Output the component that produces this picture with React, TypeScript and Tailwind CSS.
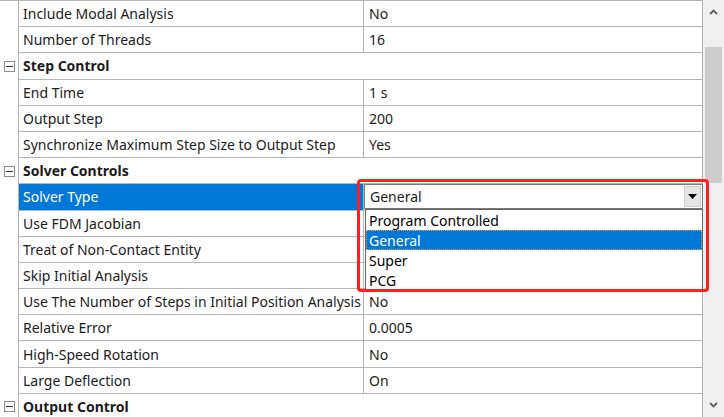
import React from "react";

type Row =
  | { kind: "group"; label: string }
  | { kind: "prop"; label: string; value: string; selected?: boolean };

const rows: Row[] = [
  { kind: "prop", label: "Include Modal Analysis", value: "No" },
  { kind: "prop", label: "Number of Threads", value: "16" },
  { kind: "group", label: "Step Control" },
  { kind: "prop", label: "End Time", value: "1 s" },
  { kind: "prop", label: "Output Step", value: "200" },
  { kind: "prop", label: "Synchronize Maximum Step Size to Output Step", value: "Yes" },
  { kind: "group", label: "Solver Controls" },
  { kind: "prop", label: "Solver Type", value: "General", selected: true },
  { kind: "prop", label: "Use FDM Jacobian", value: "" },
  { kind: "prop", label: "Treat of Non-Contact Entity", value: "" },
  { kind: "prop", label: "Skip Initial Analysis", value: "" },
  { kind: "prop", label: "Use The Number of Steps in Initial Position Analysis", value: "No" },
  { kind: "prop", label: "Relative Error", value: "0.0005" },
  { kind: "prop", label: "High-Speed Rotation", value: "No" },
  { kind: "prop", label: "Large Deflection", value: "On" },
  { kind: "group", label: "Output Control" },
];

function MinusBox() {
  return (
    <div className="w-[11px] h-[11px] border border-[#8c8c8c] bg-white flex items-center justify-center">
      <div className="w-[7px] h-px bg-[#333]" />
    </div>
  );
}

function Dropdown() {
  const items = ["Program Controlled", "General", "Super", "PCG"];
  return (
    <>
      <div className="absolute left-[-7px] top-[-5px] w-[352px] h-[113px] border-[3px] border-[#ff1f1f] rounded-[4px] z-20 pointer-events-none" />
      <div className="absolute left-0 top-0 w-[339px] h-[25px] bg-white border border-[#7a7a7a] z-10 flex items-center">
        <span className="pl-[5px] flex-1 text-[14px]">General</span>
        <div className="w-[17px] h-[21px] mr-[1px] bg-[#e6e6e6] border border-[#cfcfcf] flex items-center justify-center">
          <svg width="9" height="5" viewBox="0 0 9 5">
            <path d="M0 0 L9 0 L4.5 5 Z" fill="#000" />
          </svg>
        </div>
      </div>
      <div className="absolute left-[1px] top-[25px] w-[338px] bg-white border border-[#646464] z-10 flex flex-col">
        {items.map((it) => (
          <div
            key={it}
            className={
              it === "General"
                ? "h-[20px] flex items-center pl-[2px] text-[14px] bg-[#0078d7] text-white border border-dotted border-[#e0a060]"
                : "h-[20px] flex items-center pl-[2px] text-[14px] text-black border border-transparent"
            }
          >
            {it}
          </div>
        ))}
      </div>
    </>
  );
}

export default function App() {
  return (
    <div
      className="w-[724px] h-[417px] bg-white flex overflow-hidden text-[#1b1b1b]"
      style={{ fontFamily: '"Noto Sans", "Open Sans", sans-serif' }}
    >
      <div className="w-[703px] flex flex-col border-r border-[#b4b4b4] border-t">
        {rows.map((r, i) => (
          <div key={i} className="flex h-[26.2px] shrink-0">
            <div className="w-[19px] shrink-0 border-r border-[#b4b4b4] flex items-center justify-center">
              {r.kind === "group" && <MinusBox />}
            </div>
            {r.kind === "group" ? (
              <div className="flex-1 border-b border-[#b4b4b4] flex items-center pl-[4px] text-[14px] font-bold">
                {r.label}
              </div>
            ) : (
              <div className="flex-1 flex border-b border-[#b4b4b4]">
                <div
                  className={
                    r.selected
                      ? "w-[345px] shrink-0 border-r border-[#b4b4b4] flex items-center pl-[4px] text-[14px] bg-[#0078d7] text-white whitespace-nowrap overflow-hidden"
                      : "w-[345px] shrink-0 border-r border-[#b4b4b4] flex items-center pl-[4px] text-[14px] whitespace-nowrap overflow-hidden"
                  }
                >
                  {r.label}
                </div>
                <div className="flex-1 relative flex items-center pl-[5px] text-[14px]">
                  {r.selected ? <Dropdown /> : r.value}
                </div>
              </div>
            )}
          </div>
        ))}
      </div>
      <div className="w-[21px] bg-[#f0f0f0] flex flex-col items-center">
        <div className="h-[24px] flex items-center justify-center">
          <svg width="9" height="6" viewBox="0 0 9 6">
            <path d="M1 5 L4.5 1.5 L8 5" stroke="#606060" strokeWidth="1.8" fill="none" />
          </svg>
        </div>
        <div className="mt-[23px] w-[17px] h-[136px] bg-[#cdcdcd]" />
        <div className="flex-1" />
        <div className="h-[24px] flex items-center justify-center">
          <svg width="9" height="6" viewBox="0 0 9 6">
            <path d="M1 1 L4.5 4.5 L8 1" stroke="#606060" strokeWidth="1.8" fill="none" />
          </svg>
        </div>
      </div>
    </div>
  );
}
